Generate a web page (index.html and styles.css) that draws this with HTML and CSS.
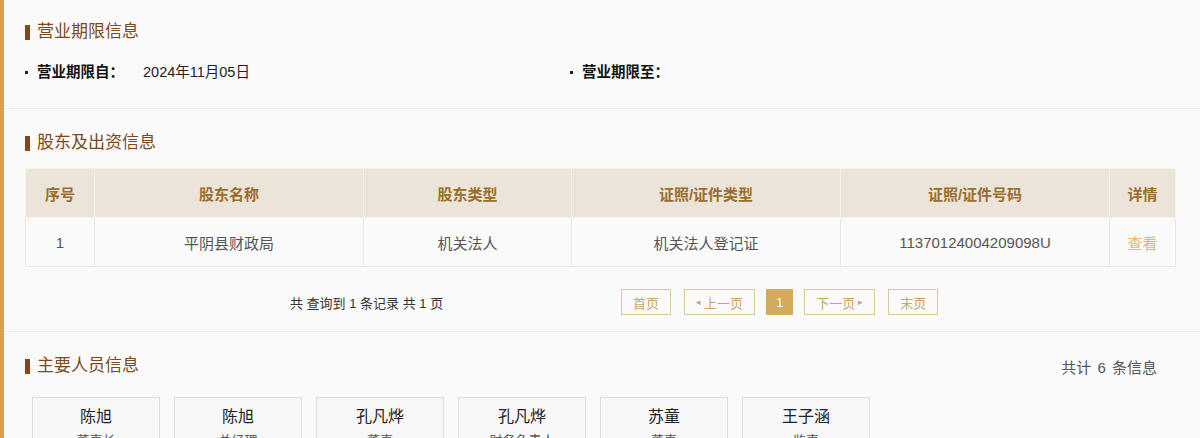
FILE: index.html
```html
<!DOCTYPE html>
<html lang="zh-CN">
<head>
    <meta charset="UTF-8">
    <meta name="viewport" content="width=device-width, initial-scale=1.0">
    <title>企业信息</title>
    <link rel="stylesheet" href="styles.css">
</head>
<body>
    <div class="page">
        <!-- 营业期限 -->
        <div class="section first">
            <h3 class="title">营业期限信息</h3>
            <div class="term">
                <div class="term-item"><span class="label">营业期限自：</span><span class="value">2024年11月05日</span></div>
                <div class="term-item"><span class="label">营业期限至：</span><span class="value"></span></div>
            </div>
        </div>

        <!-- 股东 -->
        <div class="section holders">
            <h3 class="title">股东及出资信息</h3>
            <table class="grid">
                <colgroup>
                    <col style="width:69px">
                    <col style="width:269px">
                    <col style="width:208px">
                    <col style="width:269px">
                    <col style="width:269px">
                    <col style="width:66px">
                </colgroup>
                <thead>
                    <tr>
                        <th>序号</th>
                        <th>股东名称</th>
                        <th>股东类型</th>
                        <th>证照/证件类型</th>
                        <th>证照/证件号码</th>
                        <th>详情</th>
                    </tr>
                </thead>
                <tbody>
                    <tr>
                        <td>1</td>
                        <td>平阴县财政局</td>
                        <td>机关法人</td>
                        <td>机关法人登记证</td>
                        <td>11370124004209098U</td>
                        <td><a class="view" href="#">查看</a></td>
                    </tr>
                </tbody>
            </table>
            <div class="pager">
                <span class="pager-info">共 查询到 1 条记录 共 1 页</span>
                <div class="pager-btns">
                    <a class="pg" href="#">首页</a>
                    <a class="pg" href="#"><span class="arr">◂</span>上一页</a>
                    <a class="pg current" href="#">1</a>
                    <a class="pg" href="#">下一页<span class="arr after">▸</span></a>
                    <a class="pg" href="#">末页</a>
                </div>
            </div>
        </div>

        <!-- 主要人员 -->
        <div class="section people">
            <div class="title-row">
                <h3 class="title">主要人员信息</h3>
                <span class="count">共计 6 条信息</span>
            </div>
            <div class="cards">
                <div class="card"><div class="name">陈旭</div><div class="role">董事长</div></div>
                <div class="card"><div class="name">陈旭</div><div class="role">总经理</div></div>
                <div class="card"><div class="name">孔凡烨</div><div class="role">董事</div></div>
                <div class="card"><div class="name">孔凡烨</div><div class="role">财务负责人</div></div>
                <div class="card"><div class="name">苏童</div><div class="role">董事</div></div>
                <div class="card"><div class="name">王子涵</div><div class="role">监事</div></div>
            </div>
        </div>
    </div>
</body>
</html>
```

FILE: styles.css
```css
body {
    margin: 0;
    background-color: #fafafa;
    font-family: "Liberation Sans", "Noto Sans CJK SC", sans-serif;
    color: #333;
}
.page {
    border-left: 4px solid #d4a24c;
    min-height: 100vh;
}
.section {
    padding: 22px 25px 0 21px;
    border-bottom: 1px solid #ececec;
}
.section.first {
    padding-top: 20px;
    padding-bottom: 26px;
}
.title {
    margin: 0;
    font-size: 17px;
    line-height: 24px;
    font-weight: normal;
    color: #7a4a1c;
    display: flex;
    align-items: center;
}
.title::before {
    content: "";
    width: 5px;
    height: 15px;
    background-color: #8b4513;
    margin-right: 7px;
}
.term {
    display: grid;
    grid-template-columns: 545px 1fr;
    margin-top: 18px;
    font-size: 14px;
    line-height: 20px;
}
.term-item {
    display: flex;
    align-items: center;
}
.term-item::before {
    content: "";
    width: 3px;
    height: 3px;
    background-color: #222;
    margin-right: 9px;
}
.label {
    font-weight: bold;
    color: #111;
    width: 106px;
    font-size: 14.5px;
}
.value {
    color: #222;
    font-size: 14.5px;
}

/* 表格 */
.holders {
    padding-bottom: 16px;
}
.grid {
    margin-top: 13px;
    width: 1150px;
    border-collapse: collapse;
    table-layout: fixed;
    font-size: 15px;
}
.grid th,
.grid td {
    border: 1px solid #ebe7e1;
    text-align: center;
    height: 48px;
    padding: 0;
}
.grid th {
    background-color: #ebe4d9;
    color: #9b6d2c;
    font-weight: bold;
    border-color: #f6f2ec;
}
.grid td {
    color: #555;
    background-color: #fafafa;
}
.view {
    color: #ebb36d;
    text-decoration: none;
}
.pager {
    display: flex;
    align-items: center;
    margin-top: 22px;
    height: 26px;
}
.pager-info {
    font-size: 13px;
    color: #333;
    margin-left: 265px;
    width: 331px;
}
.pager-btns {
    display: flex;
    gap: 11px;
}
.pg {
    display: flex;
    align-items: center;
    justify-content: center;
    height: 24px;
    padding: 0 11px;
    border: 1px solid #dcc69c;
    color: #c9a46a;
    font-size: 13px;
    text-decoration: none;
}
.pg:first-child {
    margin-right: 2px;
}
.pg:last-child {
    margin-left: 2px;
}
.pg.current {
    background-color: #d4aa5c;
    border-color: #d4aa5c;
    color: #fff;
    padding: 0 9px;
}
.arr {
    font-size: 9px;
    margin-right: 3px;
}
.arr.after {
    margin: 0 0 0 3px;
}

/* 人员 */
.people {
    border-bottom: none;
}
.title-row {
    display: flex;
    justify-content: space-between;
    align-items: center;
}
.count {
    font-size: 15px;
    color: #555;
    margin-right: 18px;
    word-spacing: 2px;
}
.cards {
    display: flex;
    gap: 14px;
    margin-top: 19px;
    padding-left: 7px;
}
.card {
    width: 126px;
    border: 1px solid #dddddd;
    background-color: #f7f7f7;
    text-align: center;
    padding-top: 8px;
    height: 60px;
}
.name {
    font-size: 16px;
    line-height: 22px;
    color: #222;
}
.role {
    font-size: 13px;
    line-height: 20px;
    color: #555;
    margin-top: 3px;
}
```
